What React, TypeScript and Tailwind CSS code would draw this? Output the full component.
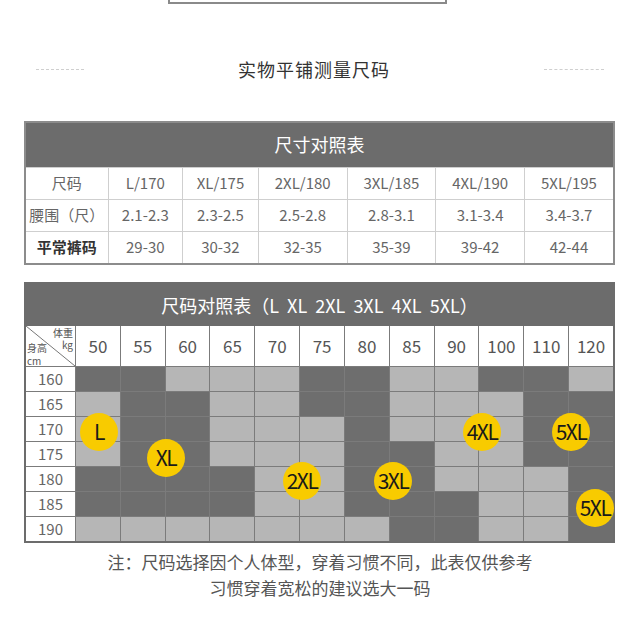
import React from "react"

const font = { fontFamily: '"Noto Sans CJK SC", "Noto Sans", sans-serif' }

const sizes = ["L/170", "XL/175", "2XL/180", "3XL/185", "4XL/190", "5XL/195"]
const waist = ["2.1-2.3", "2.3-2.5", "2.5-2.8", "2.8-3.1", "3.1-3.4", "3.4-3.7"]
const pants = ["29-30", "30-32", "32-35", "35-39", "39-42", "42-44"]

const weights = [50, 55, 60, 65, 70, 75, 80, 85, 90, 100, 110, 120]
const heights = [160, 165, 170, 175, 180, 185, 190]

// D = dark cell, L = light cell
const pattern = [
  "DDLLLDDLLDDL",
  "LDDLLDDLLLDD",
  "LDDLLLDLLLDD",
  "LDDLLLDDLLDD",
  "DDDDLLDDLLLD",
  "DDDDLLDDDLLD",
  "LLLLLLLDDLLD",
]

const badges = [
  { label: "L", x: 73, y: 148 },
  { label: "XL", x: 140, y: 174 },
  { label: "2XL", x: 276, y: 197 },
  { label: "3XL", x: 367, y: 197 },
  { label: "4XL", x: 456, y: 148 },
  { label: "5XL", x: 545, y: 148 },
  { label: "5XL", x: 569, y: 224 },
]

function SizeTable() {
  return (
    <table className="ml-[24px] w-[591px] border-collapse border-2 border-[#8c8c8c] text-[15px] text-[#666]">
      <thead>
        <tr>
          <th colSpan={7} className="h-[45px] bg-[#6c6c6c] text-[18px] font-normal text-white">
            尺寸对照表
          </th>
        </tr>
      </thead>
      <tbody>
        <tr className="h-[32px]">
          <td className="w-[83px] border border-[#cfcfcf] text-center">尺码</td>
          {sizes.map((s) => (
            <td key={s} className="border border-[#cfcfcf] text-center">{s}</td>
          ))}
        </tr>
        <tr className="h-[32px]">
          <td className="border border-[#cfcfcf] text-center">腰围（尺）</td>
          {waist.map((s) => (
            <td key={s} className="border border-[#cfcfcf] text-center">{s}</td>
          ))}
        </tr>
        <tr className="h-[33px]">
          <td className="border border-[#cfcfcf] text-center font-bold text-[#333]">平常裤码</td>
          {pants.map((s) => (
            <td key={s} className="border border-[#cfcfcf] text-center">{s}</td>
          ))}
        </tr>
      </tbody>
    </table>
  )
}

function Corner() {
  return (
    <div className="relative h-full bg-white text-[10px] leading-[10px] text-[#555]">
      <svg className="absolute inset-0 h-full w-full" viewBox="0 0 49 40" preserveAspectRatio="none">
        <line x1="0" y1="0" x2="49" y2="40" stroke="#777" strokeWidth="1" />
      </svg>
      <span className="absolute right-[2px] top-[2px]">体重</span>
      <span className="absolute right-[2px] top-[14px]">kg</span>
      <span className="absolute left-[1px] top-[17px]">身高</span>
      <span className="absolute bottom-0 left-[1px]">cm</span>
    </div>
  )
}

function ChartTable() {
  return (
    <div className="relative ml-[24px] mt-[17px] w-[591px] border-2 border-[#6c6c6c]">
      <div className="flex h-[42px] items-center justify-center whitespace-pre bg-[#6c6c6c] text-[18px] text-white">
        尺码对照表（L  XL  2XL  3XL  4XL  5XL）
      </div>
      <div className="grid grid-cols-[49px_repeat(12,1fr)] gap-px bg-[#7b7b7b]">
        <div className="h-[40px]">
          <Corner />
        </div>
        {weights.map((w) => (
          <div key={w} className="flex h-[40px] items-center justify-center bg-white text-[17px] text-[#555]">
            {w}
          </div>
        ))}
        {heights.map((h, r) => (
          <React.Fragment key={h}>
            <div className="flex h-[24px] items-center justify-center bg-white text-[15px] text-[#666]">{h}</div>
            {pattern[r].split("").map((c, i) => (
              <div key={i} className={c === "D" ? "h-[24px] bg-[#6e6e6e]" : "h-[24px] bg-[#b6b6b6]"} />
            ))}
          </React.Fragment>
        ))}
      </div>
      {badges.map((b, i) => (
        <div
          key={i}
          className="absolute flex h-[38px] w-[38px] -translate-x-1/2 -translate-y-1/2 items-center justify-center rounded-full bg-[#f8cb00] text-[21px] tracking-[-1.5px] text-[#1a1a1a]"
          style={{ left: b.x, top: b.y }}
        >
          {b.label}
        </div>
      ))}
    </div>
  )
}

export default function App() {
  return (
    <div className="relative h-[640px] w-[640px] overflow-hidden bg-white" style={font}>
      <div className="ml-[168px] h-[4px] w-[279px] border-2 border-t-0 border-[#8a8a8a]" />

      <div className="mt-[52px] flex items-center justify-between px-[36px]">
        <div className="w-[48px] border-t border-dashed border-[#cfcfcf]" />
        <div className="text-[18px] tracking-[1px] text-[#333]">实物平铺测量尺码</div>
        <div className="w-[60px] border-t border-dashed border-[#cfcfcf]" />
      </div>

      <div className="mt-[38px]">
        <SizeTable />
      </div>

      <ChartTable />

      <div className="mt-[6px] text-center text-[17px] leading-[26px] text-[#555]">
        <div>注：尺码选择因个人体型，穿着习惯不同，此表仅供参考</div>
        <div>习惯穿着宽松的建议选大一码</div>
      </div>
    </div>
  )
}
